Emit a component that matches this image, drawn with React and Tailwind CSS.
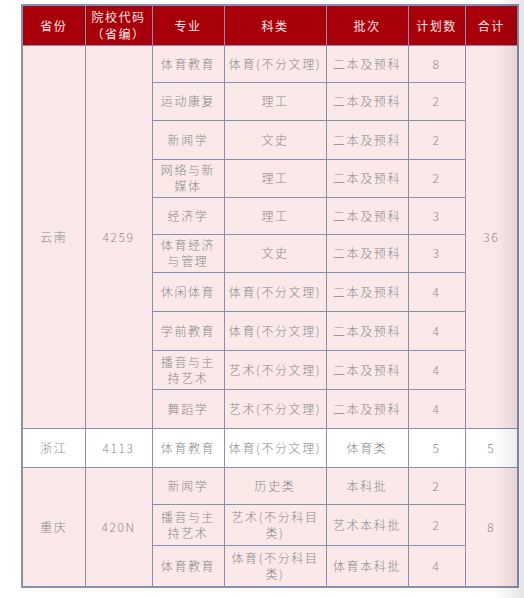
const font = { fontFamily: '"Noto Sans CJK SC", "Noto Sans", sans-serif' };

const yunnan = [
  { m: "体育教育", k: "体育(不分文理)", p: "二本及预科", n: 8, h: "h-[37px]" },
  { m: "运动康复", k: "理工", p: "二本及预科", n: 2, h: "h-[38px]" },
  { m: "新闻学", k: "文史", p: "二本及预科", n: 2, h: "h-[39px]" },
  { m: ["网络与新", "媒体"], k: "理工", p: "二本及预科", n: 2, h: "h-[38px]" },
  { m: "经济学", k: "理工", p: "二本及预科", n: 3, h: "h-[37px]" },
  { m: ["体育经济", "与管理"], k: "文史", p: "二本及预科", n: 3, h: "h-[38px]" },
  { m: "休闲体育", k: "体育(不分文理)", p: "二本及预科", n: 4, h: "h-[39px]" },
  { m: "学前教育", k: "体育(不分文理)", p: "二本及预科", n: 4, h: "h-[39px]" },
  { m: ["播音与主", "持艺术"], k: "艺术(不分文理)", p: "二本及预科", n: 4, h: "h-[39px]" },
  { m: "舞蹈学", k: "艺术(不分文理)", p: "二本及预科", n: 4, h: "h-[39px]" },
];

const chongqing = [
  { m: "新闻学", k: "历史类", p: "本科批", n: 2, h: "h-[37px]" },
  { m: ["播音与主", "持艺术"], k: ["艺术(不分科目", "类)"], p: "艺术本科批", n: 2, h: "h-[41px]" },
  { m: "体育教育", k: ["体育(不分科目", "类)"], p: "体育本科批", n: 4, h: "h-[42px]" },
];

const td = "border border-[#8a8fb0] text-center align-middle px-0 leading-[16px]";
const th = "border border-[#8a8fb0] text-center align-middle px-0 leading-[17px] font-normal";

function Txt({ v }) {
  if (Array.isArray(v)) {
    return (
      <>
        {v[0]}
        <br />
        {v[1]}
      </>
    );
  }
  return v;
}

export default function App() {
  return (
    <div className="relative w-[524px] h-[598px] bg-white overflow-hidden pt-[4px] pl-[21px]" style={font}>
      <table className="border-collapse table-fixed w-[496px] text-[12px] font-light tracking-[1.6px] text-[#8a8a8a] border-2 border-[#8a8fb0]">
        <colgroup>
          <col className="w-[63px]" />
          <col className="w-[67px]" />
          <col className="w-[72px]" />
          <col className="w-[102px]" />
          <col className="w-[82px]" />
          <col className="w-[57px]" />
          <col className="w-[53px]" />
        </colgroup>
        <thead>
          <tr className="h-[40px] bg-[#a8000b] text-[#f8e4e4] text-[12px] tracking-[1.5px]">
            <th className={th}>省份</th>
            <th className={th}>
              院校代码
              <br />
              （省编）
            </th>
            <th className={th}>专业</th>
            <th className={th}>科类</th>
            <th className={th}>批次</th>
            <th className={th}>计划数</th>
            <th className={th}>合计</th>
          </tr>
        </thead>
        <tbody>
          {yunnan.map((r, i) => (
            <tr key={i} className={r.h + " bg-[#fbe8e9]"}>
              {i === 0 && (
                <>
                  <td rowSpan={10} className={td}>云南</td>
                  <td rowSpan={10} className={td}>4259</td>
                </>
              )}
              <td className={td}><Txt v={r.m} /></td>
              <td className={td}><Txt v={r.k} /></td>
              <td className={td}>{r.p}</td>
              <td className={td}>{r.n}</td>
              {i === 0 && <td rowSpan={10} className={td}>36</td>}
            </tr>
          ))}
          <tr className="h-[39px] bg-white">
            <td className={td}>浙江</td>
            <td className={td}>4113</td>
            <td className={td}>体育教育</td>
            <td className={td}>体育(不分文理)</td>
            <td className={td}>体育类</td>
            <td className={td}>5</td>
            <td className={td}>5</td>
          </tr>
          {chongqing.map((r, i) => (
            <tr key={i} className={r.h + " bg-[#fbe8e9]"}>
              {i === 0 && (
                <>
                  <td rowSpan={3} className={td}>重庆</td>
                  <td rowSpan={3} className={td}>420N</td>
                </>
              )}
              <td className={td}><Txt v={r.m} /></td>
              <td className={td}><Txt v={r.k} /></td>
              <td className={td}>{r.p}</td>
              <td className={td}>{r.n}</td>
              {i === 0 && <td rowSpan={3} className={td}>8</td>}
            </tr>
          ))}
        </tbody>
      </table>
      <div className="absolute top-0 right-0 w-[30px] h-full bg-linear-to-r from-transparent to-black/10" />
    </div>
  );
}
